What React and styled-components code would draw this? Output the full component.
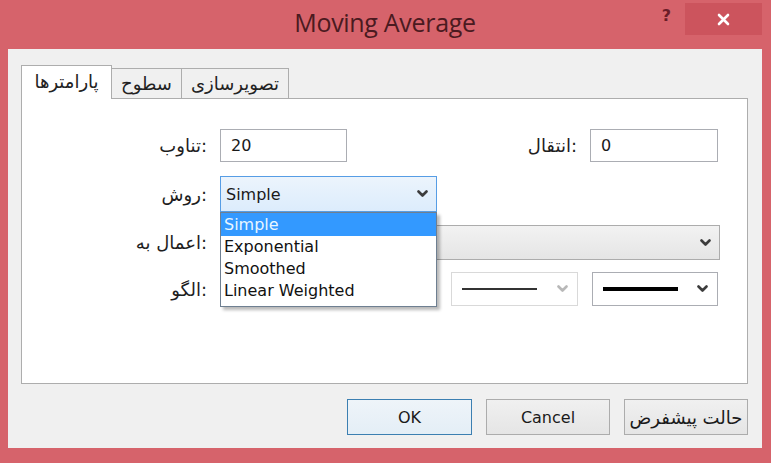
import styled, { createGlobalStyle } from "styled-components";

const GlobalStyle = createGlobalStyle`
  html, body {
    margin: 0;
    padding: 0;
  }
  body {
    width: 771px;
    height: 463px;
    overflow: hidden;
    background: #d6636b;
    font-family: "DejaVu Sans", "Noto Sans", sans-serif;
    color: #1a1a1a;
  }
`;

const Chevron = ({ color = "#3c3c3c" }) => (
  <svg width="11" height="8" viewBox="0 0 11 8">
    <polyline
      points="1.5,1.5 5.5,5.5 9.5,1.5"
      fill="none"
      stroke={color}
      strokeWidth="2.6"
      strokeLinecap="round"
      strokeLinejoin="round"
    />
  </svg>
);

const methods = ["Simple", "Exponential", "Smoothed", "Linear Weighted"];

// in the LTR dialog the trailing colon sits next to the field
const caption = (text) => text + ":";

export default function App() {
  return (
    <>
      <GlobalStyle />
      <Window>
        <TitleBar>
          <span />
          <Title>Moving Average</Title>
          <Controls>
            <Help>?</Help>
            <CloseButton>
              <svg width="13" height="13" viewBox="0 0 13 13">
                <path
                  d="M2 2 L11 11 M11 2 L2 11"
                  stroke="#fff"
                  strokeWidth="2.6"
                  strokeLinecap="round"
                />
              </svg>
            </CloseButton>
          </Controls>
        </TitleBar>

        <Client>
          <TabStrip>
            <Tab $active $width={91}>پارامترها</Tab>
            <Tab $width={71}>سطوح</Tab>
            <Tab $width={108}>تصویرسازی</Tab>
          </TabStrip>

          <Panel>
            <Row $height={33}>
              <Label>{caption("تناوب")}</Label>
              <TextBox $width={127}>20</TextBox>
              <Label $width={216}>{caption("انتقال")}</Label>
              <TextBox $width={128}>0</TextBox>
            </Row>

            <Row $height={36} $top={14}>
              <Label>{caption("روش")}</Label>
              <ComboWrap>
                <Combo $open $width={217}>
                  <span>Simple</span>
                  <Chevron />
                </Combo>
                <DropList>
                  {methods.map((m, i) => (
                    <DropItem key={m} $selected={i === 0}>
                      {m}
                    </DropItem>
                  ))}
                </DropList>
              </ComboWrap>
            </Row>

            <Row $height={35} $top={13}>
              <Label>{caption("اعمال به")}</Label>
              <Combo $width={500}>
                <span />
                <Chevron />
              </Combo>
            </Row>

            <Row $height={34} $top={12}>
              <Label>{caption("الگو")}</Label>
              <LineCombo $width={217} />
              <LineCombo $width={127} $disabled>
                <LineSample $thick={2} $color="#333" />
                <Chevron color="#b8b8b8" />
              </LineCombo>
              <LineCombo $width={126}>
                <LineSample $thick={4} $color="#000" />
                <Chevron />
              </LineCombo>
            </Row>
          </Panel>

          <ButtonRow>
            <Button $default $width={125}>OK</Button>
            <Button $width={124}>Cancel</Button>
            <Button $width={124} $persian>حالت پیشفرض</Button>
          </ButtonRow>
        </Client>
      </Window>
    </>
  );
}

const Window = styled.div`
  width: 771px;
  height: 463px;
  box-sizing: border-box;
  padding: 0 9px 15px 8px;
  display: flex;
  flex-direction: column;
`;

const TitleBar = styled.div`
  height: 49px;
  flex: none;
  display: grid;
  grid-template-columns: 1fr auto 1fr;
  align-items: start;
`;

const Title = styled.div`
  font-family: "Open Sans", "Noto Sans", sans-serif;
  font-size: 25px;
  line-height: 30px;
  padding-top: 7px;
  color: #4a1a20;
  letter-spacing: -0.3px;
`;

const Controls = styled.div`
  display: flex;
  justify-content: flex-end;
  align-items: flex-start;
`;

const Help = styled.div`
  font-family: "DejaVu Sans", sans-serif;
  font-weight: bold;
  font-size: 16px;
  color: #6a1c28;
  margin-top: 6px;
  margin-right: 14px;
`;

const CloseButton = styled.div`
  width: 77px;
  height: 32px;
  margin-top: 3px;
  background: #cc545d;
  display: flex;
  align-items: center;
  justify-content: center;
`;

const Client = styled.div`
  flex: 1;
  background: #f0f0f0;
  padding: 17px 14px 0 13px;
  display: flex;
  flex-direction: column;
`;

const TabStrip = styled.div`
  display: flex;
  align-items: flex-end;
  height: 33px;
  margin-bottom: -1px;
  position: relative;
  z-index: 1;
`;

const Tab = styled.div`
  box-sizing: border-box;
  width: ${(p) => p.$width}px;
  height: ${(p) => (p.$active ? 34 : 31)}px;
  margin-left: ${(p) => (p.$active ? 0 : -1)}px;
  border: 1px solid #adadad;
  border-bottom: ${(p) => (p.$active ? "none" : "1px solid #adadad")};
  background: ${(p) => (p.$active ? "#fff" : "#f0f0f0")};
  display: flex;
  align-items: center;
  justify-content: center;
  font-size: 18px;
  color: #222;
  padding-bottom: ${(p) => (p.$active ? 3 : 0)}px;
  white-space: nowrap;
  &:first-child {
    margin-left: 0;
  }
`;

const Panel = styled.div`
  height: 286px;
  box-sizing: border-box;
  background: #fff;
  border: 1px solid #adadad;
  padding: 30px 0 0 35px;
  display: flex;
  flex-direction: column;
`;

const Row = styled.div`
  display: flex;
  align-items: center;
  gap: 14px;
  height: ${(p) => p.$height}px;
  margin-top: ${(p) => p.$top || 0}px;
`;

const Label = styled.div`
  width: ${(p) => p.$width || 150}px;
  margin-right: -1px;
  text-align: right;
  font-size: 18px;
  color: #1e1e1e;
  flex: none;
  white-space: nowrap;
`;

const TextBox = styled.div`
  box-sizing: border-box;
  width: ${(p) => p.$width}px;
  height: 100%;
  border: 1px solid #abadb3;
  background: #fff;
  padding-left: 10px;
  display: flex;
  align-items: center;
  font-size: 16px;
`;

const ComboWrap = styled.div`
  position: relative;
  height: 100%;
  z-index: 2;
`;

const Combo = styled.div`
  box-sizing: border-box;
  width: ${(p) => p.$width}px;
  height: 100%;
  border: 1px solid ${(p) => (p.$open ? "#569de5" : "#acacac")};
  background: ${(p) =>
    p.$open
      ? "linear-gradient(#ecf4fc, #dcecfc)"
      : "linear-gradient(#f2f2f2, #e5e5e5)"};
  display: flex;
  align-items: center;
  justify-content: space-between;
  padding: 0 8px 0 5px;
  font-size: 16px;
  flex: none;
`;

const DropList = styled.div`
  position: absolute;
  top: 100%;
  left: 0;
  width: 217px;
  box-sizing: border-box;
  border: 1px solid #6e7f91;
  background: #fff;
  padding-bottom: 4px;
  box-shadow: 3px 3px 3px rgba(0, 0, 0, 0.28);
`;

const DropItem = styled.div`
  height: 22px;
  line-height: 22px;
  padding-left: 3px;
  font-size: 16px;
  background: ${(p) => (p.$selected ? "#3399ff" : "transparent")};
  color: ${(p) => (p.$selected ? "#e8f6ff" : "#111")};
  &:first-child {
    height: 23px;
    line-height: 23px;
  }
`;

const LineCombo = styled.div`
  box-sizing: border-box;
  width: ${(p) => p.$width}px;
  height: 100%;
  border: 1px solid ${(p) => (p.$disabled ? "#d9d9d9" : "#abadb3")};
  background: #fff;
  display: flex;
  align-items: center;
  justify-content: space-between;
  padding: 0 9px 0 10px;
  flex: none;
`;

const LineSample = styled.div`
  width: 75px;
  height: ${(p) => p.$thick}px;
  background: ${(p) => p.$color};
`;

const ButtonRow = styled.div`
  display: flex;
  justify-content: flex-end;
  gap: 14px;
  margin-top: 15px;
`;

const Button = styled.div`
  box-sizing: border-box;
  width: ${(p) => p.$width}px;
  height: 36px;
  border: 1px solid ${(p) => (p.$default ? "#3c7fb1" : "#acacac")};
  background: ${(p) =>
    p.$default
      ? "linear-gradient(#eef4f9, #e4eef6)"
      : "linear-gradient(#f0f0f0, #e5e5e5)"};
  display: flex;
  align-items: center;
  justify-content: center;
  font-size: ${(p) => (p.$persian ? 18 : 16)}px;
  color: #1a1a1a;
  white-space: nowrap;
  overflow: hidden;
`;
